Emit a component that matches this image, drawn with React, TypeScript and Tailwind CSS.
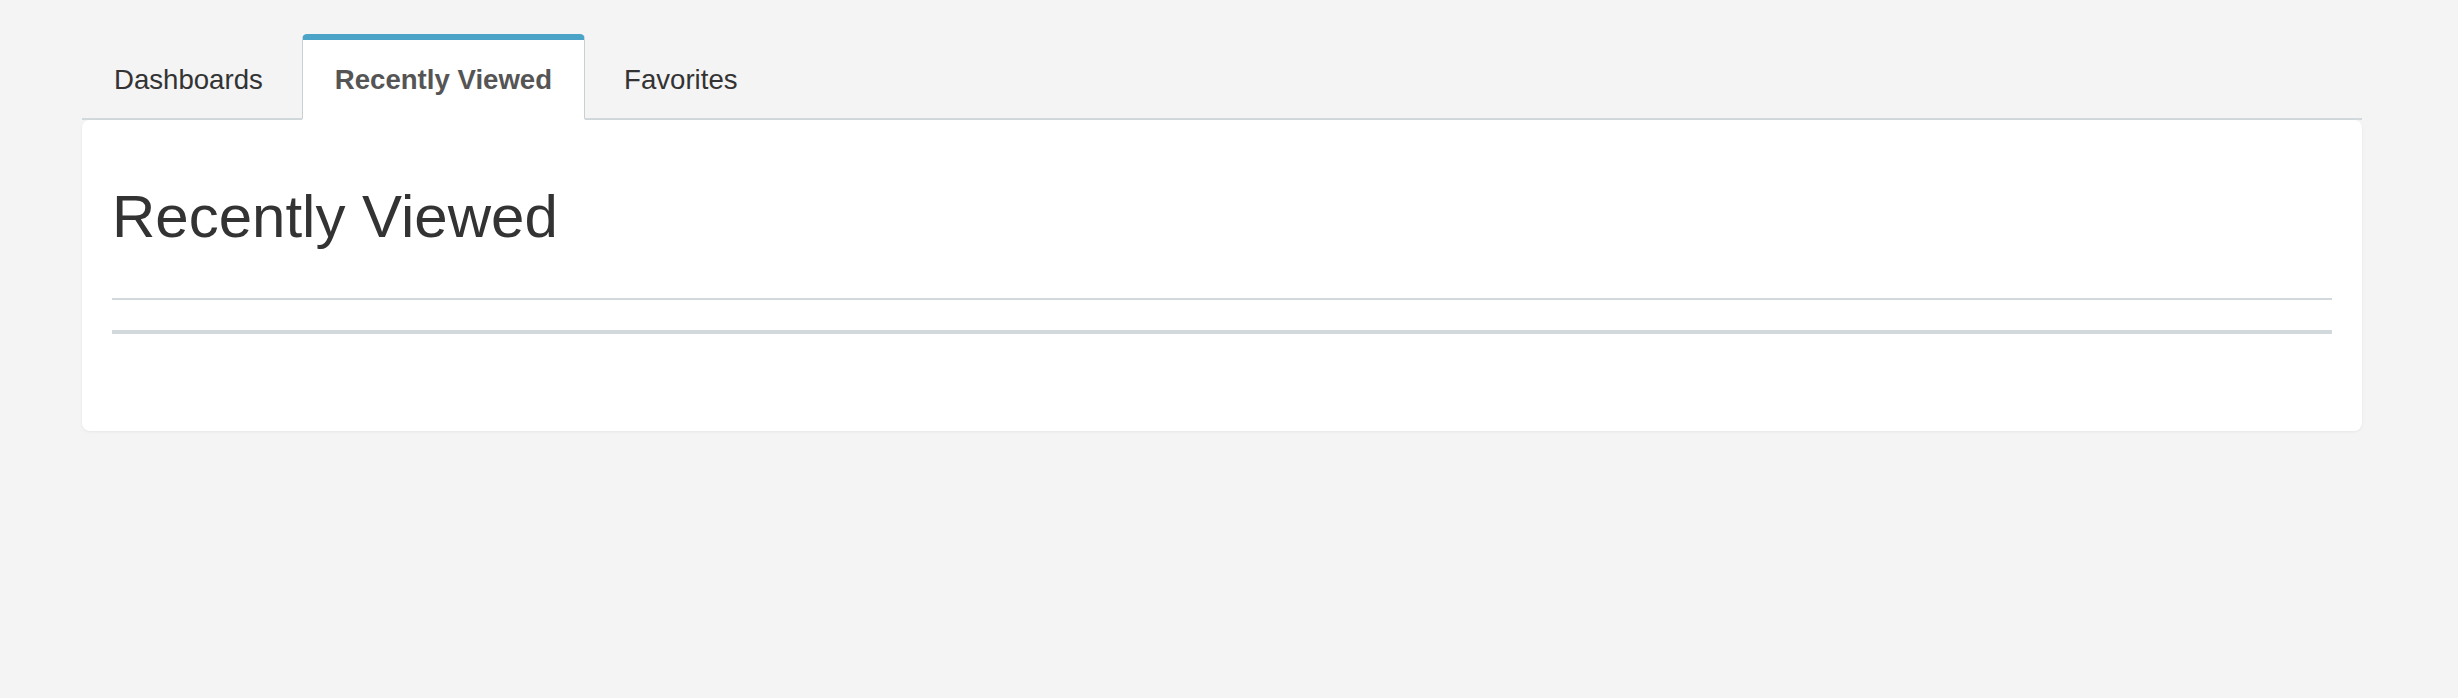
import React, { useState } from 'react';

const tabs = ['Dashboards', 'Recently Viewed', 'Favorites'];

const App = () => {
  const [active, setActive] = useState('Recently Viewed');

  return (
    <div className="min-h-[698px] bg-[#f4f4f4] pt-[34px] font-['Liberation_Sans',Arial,sans-serif] text-[#333]">
      <div className="ml-[82px] w-[2280px]">
        {/* tab strip */}
        <div className="flex gap-[7px] border-b-2 border-[#d2d9dc]">
          {tabs.map((tab) => {
            const isActive = tab === active;
            return (
              <button
                key={tab}
                onClick={() => setActive(tab)}
                className={
                  isActive
                    ? '-mb-[2px] rounded-t-[5px] border-x border-t-[6px] border-b-2 border-x-[#c9d0d4] border-t-[#4ba4c8] border-b-white bg-white px-[32px] pt-[20px] pb-[18px] text-[27.6px] leading-[40px] font-bold text-[#555]'
                    : 'border-t-[6px] border-transparent px-[32px] pt-[20px] pb-[18px] text-[27.6px] leading-[40px] text-[#333]'
                }
              >
                {tab}
              </button>
            );
          })}
        </div>

        {/* panel */}
        <div className="rounded-lg bg-white px-[30px] pt-[64px] pb-[97px] shadow-[0_1px_3px_rgba(0,0,0,0.06)]">
          <h1 className="text-[60px] leading-[66px] font-normal text-[#333]">{active}</h1>
          <div className="mt-[48px] h-[2px] bg-[#d2d9dc]" />
          <div className="mt-[30px] h-[4px] bg-[#d2d9dc]" />
        </div>
      </div>
    </div>
  );
};

export default App;
